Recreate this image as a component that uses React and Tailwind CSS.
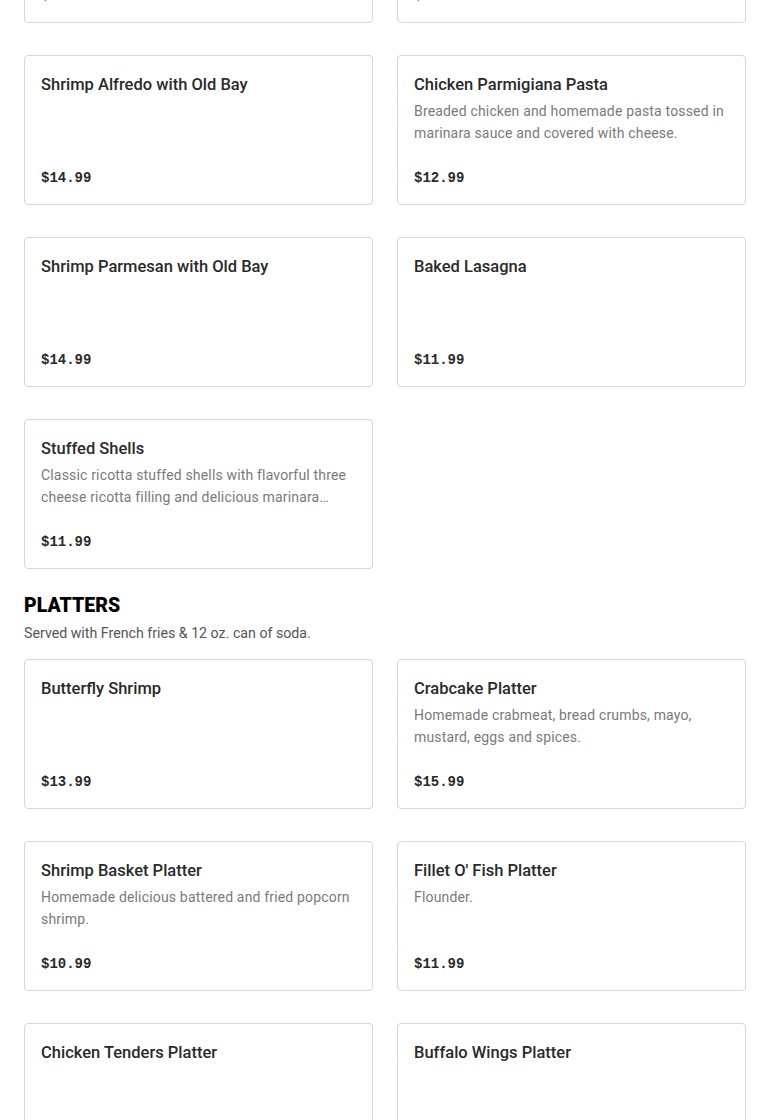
import React from "react";

const Card = ({ title, desc, price }) => (
  <div className="flex h-[150px] flex-col rounded-[4px] border border-[#d6d6d6] bg-white px-4 pt-4 pb-4">
    <div className="text-[16.5px] font-medium leading-[26px] text-[#2a2a2a]" style={{ fontFamily: "Roboto, sans-serif" }}>{title}</div>
    {desc && (
      <div className="mt-[2px] line-clamp-2 text-[14px] leading-[22px] tracking-[0.17px] text-[#7a7a7a]" style={{ fontFamily: "Roboto, sans-serif" }}>{desc}</div>
    )}
    <div className="mt-auto text-[14px] font-bold leading-5 text-[#2a2a2a]" style={{ fontFamily: "'Liberation Mono', monospace" }}>{price}</div>
  </div>
);

const Grid = ({ items }) => (
  <div className="grid grid-cols-2 gap-x-6 gap-y-8">
    {items.map((it, i) => (
      <Card key={i} {...it} />
    ))}
  </div>
);

export default function App() {
  const pasta = [
    { title: "Chicken Alfredo", price: "$12.99" },
    { title: "Shrimp Alfredo", price: "$13.99" },
    { title: "Shrimp Alfredo with Old Bay", price: "$14.99" },
    { title: "Chicken Parmigiana Pasta", desc: "Breaded chicken and homemade pasta tossed in marinara sauce and covered with cheese.", price: "$12.99" },
    { title: "Shrimp Parmesan with Old Bay", price: "$14.99" },
    { title: "Baked Lasagna", price: "$11.99" },
    { title: "Stuffed Shells", desc: "Classic ricotta stuffed shells with flavorful three cheese ricotta filling and delicious marinara sauce.", price: "$11.99" },
  ];
  const platters = [
    { title: "Butterfly Shrimp", price: "$13.99" },
    { title: "Crabcake Platter", desc: "Homemade crabmeat, bread crumbs, mayo, mustard, eggs and spices.", price: "$15.99" },
    { title: "Shrimp Basket Platter", desc: "Homemade delicious battered and fried popcorn shrimp.", price: "$10.99" },
    { title: "Fillet O' Fish Platter", desc: "Flounder.", price: "$11.99" },
    { title: "Chicken Tenders Platter", price: "$11.99" },
    { title: "Buffalo Wings Platter", price: "$12.99" },
  ];
  return (
    <div className="h-[1120px] overflow-hidden bg-white px-6">
      <div className="-mt-[127px]">
        <Grid items={pasta} />
        <div className="mt-[25px]">
          <h2 className="text-[19.5px] font-black uppercase leading-6 text-black" style={{ fontFamily: "Roboto, sans-serif" }}>Platters</h2>
          <p className="mt-[3px] text-[14.2px] leading-6 text-[#555]" style={{ fontFamily: "Roboto, sans-serif" }}>Served with French fries &amp; 12 oz. can of soda.</p>
        </div>
        <div className="mt-[14px]">
          <Grid items={platters} />
        </div>
      </div>
    </div>
  );
}
